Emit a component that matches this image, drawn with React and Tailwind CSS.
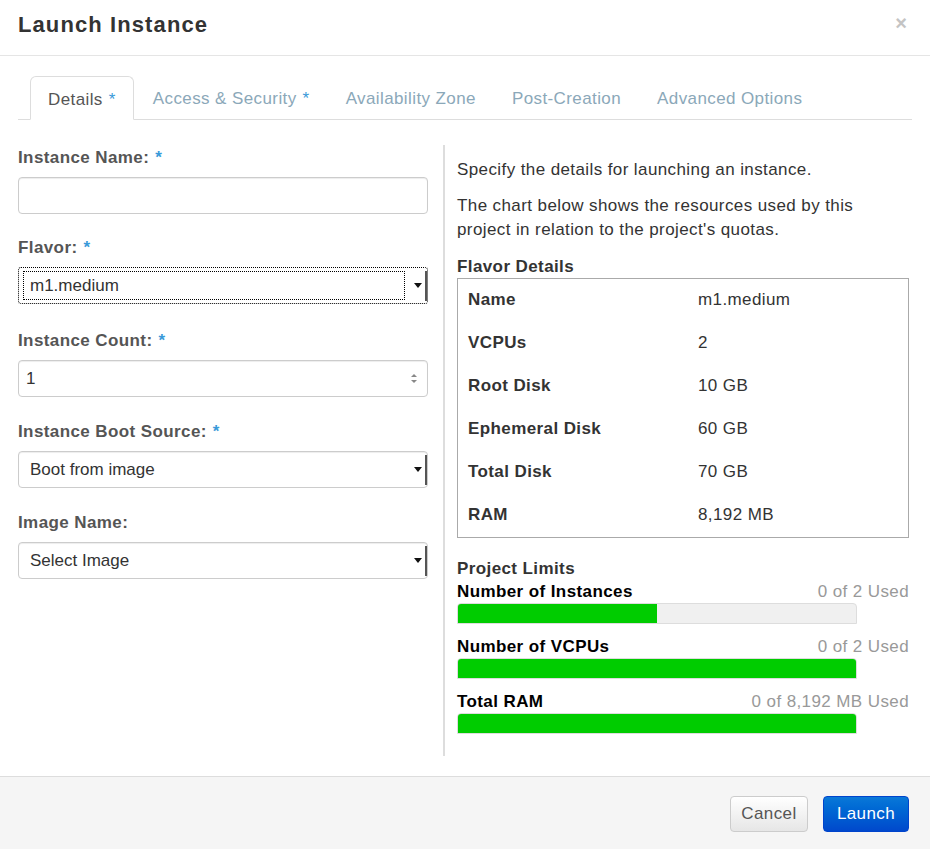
import React from "react";

const Star = () => <span className="text-[#3a9ad9] ml-[6px]">*</span>;

function Arrow() {
  return (
    <div className="flex items-center self-stretch">
      <svg width="8" height="5" viewBox="0 0 8 5" className="mr-[3px]">
        <path d="M0 0 L8 0 L4 5 Z" fill="#111" />
      </svg>
      <div className="w-[2px] h-[30px] bg-[#555] mt-[3px] self-start" />
    </div>
  );
}

function Select({ value, focused }) {
  if (focused) {
    return (
      <div className="h-[37px] border border-dotted border-black rounded-[3px] flex items-center pl-[4px] bg-white">
        <div className="flex-1 h-[29px] border border-dotted border-black flex items-center pl-[6px] text-[#333] mr-[9px]">
          {value}
        </div>
        <Arrow />
      </div>
    );
  }
  return (
    <div className="h-[37px] border border-[#ccc] rounded-[4px] flex items-center pl-[11px] bg-white shadow-[inset_0_1px_1px_rgba(0,0,0,0.075)]">
      <div className="flex-1 text-[#333]">{value}</div>
      <Arrow />
    </div>
  );
}

function Field({ label, required, children, mb }) {
  return (
    <div className={mb}>
      <div className="h-[20px] leading-[20px] mb-[9px] font-bold text-[#555] tracking-[0.4px]">
        {label}
        {required && <Star />}
      </div>
      {children}
    </div>
  );
}

function Limit({ label, used, pct }) {
  return (
    <div className="mb-[13px]">
      <div className="flex justify-between h-[20px] leading-[20px]">
        <span className="font-bold text-black tracking-[0.4px]">{label}</span>
        <span className="text-[#999] tracking-[0.4px]">{used}</span>
      </div>
      <div className="mt-[1px] w-[400px] h-[21px] bg-[#f0f0f0] border border-[#ddd] rounded-t-[4px] overflow-hidden">
        <div className="h-full bg-[#00cc00]" style={{ width: `${pct}%` }} />
      </div>
    </div>
  );
}

export default function App() {
  const tabs = [
    ["Access & Security", true],
    ["Availability Zone", false],
    ["Post-Creation", false],
    ["Advanced Options", false],
  ];
  const rows = [
    ["Name", "m1.medium"],
    ["VCPUs", "2"],
    ["Root Disk", "10 GB"],
    ["Ephemeral Disk", "60 GB"],
    ["Total Disk", "70 GB"],
    ["RAM", "8,192 MB"],
  ];
  return (
    <div className="w-[930px] h-[849px] bg-white flex flex-col font-['Liberation_Sans',Arial,sans-serif] text-[17px] text-[#333]">
      <div className="h-[56px] border-b border-[#e5e5e5] px-[18px] flex items-center justify-between shrink-0">
        <h3 className="text-[22px] font-bold text-[#333] tracking-[1.1px] mt-[-6px]">Launch Instance</h3>
        <span className="text-[#c4c4c4] text-[20px] font-bold mr-[5px] mt-[-9px]">×</span>
      </div>

      <div className="flex-1 px-[18px] pt-[20px] flex flex-col">
        <div className="flex items-end h-[44px] border-b border-[#ddd] pl-[12px]">
          <div className="h-[44px] pt-[3px] px-[17px] mr-[2px] border border-[#ddd] border-b-white rounded-t-[6px] -mb-px bg-white flex items-center text-[#555] tracking-[0.4px]">
            Details
            <Star />
          </div>
          {tabs.map(([t, req]) => (
            <div
              key={t}
              className="h-[44px] pt-[3px] px-[17px] mr-[2px] flex items-center text-[#8ba8b9] tracking-[0.4px]"
            >
              {t}
              {req && <Star />}
            </div>
          ))}
        </div>

        <div className="flex flex-1 pt-[25px] pb-[20px]">
          <div className="w-[410px] pt-[3px] mr-[15px]">
            <Field label="Instance Name:" required mb="mb-[24px]">
              <div className="h-[37px] border border-[#ccc] rounded-[4px] bg-white shadow-[inset_0_1px_1px_rgba(0,0,0,0.075)]" />
            </Field>
            <Field label="Flavor:" required mb="mb-[27px]">
              <Select value="m1.medium" focused />
            </Field>
            <Field label="Instance Count:" required mb="mb-[25px]">
              <div className="h-[37px] border border-[#ccc] rounded-[4px] bg-white flex items-center pl-[7px] pr-[10px] shadow-[inset_0_1px_1px_rgba(0,0,0,0.075)]">
                <span className="flex-1">1</span>
                <svg width="6" height="11" viewBox="0 0 6 11">
                  <path d="M0 4 L6 4 L3 1 Z" fill="#888" />
                  <path d="M0 7 L6 7 L3 10 Z" fill="#888" />
                </svg>
              </div>
            </Field>
            <Field label="Instance Boot Source:" required mb="mb-[25px]">
              <Select value="Boot from image" />
            </Field>
            <Field label="Image Name:" mb="mb-[25px]">
              <Select value="Select Image" />
            </Field>
          </div>

          <div className="flex-1 border-l-2 border-[#ddd] pl-[12px]">
            <p className="leading-[24px] mt-[13px] tracking-[0.4px]">Specify the details for launching an instance.</p>
            <p className="leading-[24px] mt-[12px] tracking-[0.4px] w-[420px]">
              The chart below shows the resources used by this project in relation to the project's quotas.
            </p>
            <div className="mt-[15px] h-[21px] leading-[20px] font-bold tracking-[0.4px]">Flavor Details</div>
            <div className="border border-[#aaa] w-[452px]">
              {rows.map(([k, v]) => (
                <div key={k} className="h-[43px] grid grid-cols-[230px_1fr] items-center px-[10px] pb-[2px]">
                  <span className="font-bold tracking-[0.4px]">{k}</span>
                  <span className="tracking-[0.4px]">{v}</span>
                </div>
              ))}
            </div>
            <div className="mt-[21px] mb-[3px] h-[20px] leading-[20px] font-bold tracking-[0.4px] w-[452px]">Project Limits</div>
            <div className="w-[452px]">
              <Limit label="Number of Instances" used="0 of 2 Used" pct={50} />
              <Limit label="Number of VCPUs" used="0 of 2 Used" pct={100} />
              <Limit label="Total RAM" used="0 of 8,192 MB Used" pct={100} />
            </div>
          </div>
        </div>
      </div>

      <div className="h-[73px] shrink-0 border-t border-[#ddd] bg-[#f5f5f5] flex items-start justify-end pt-[19px] pr-[21px] gap-[15px]">
        <button className="h-[36px] w-[78px] rounded-[4px] border border-[#ccc] bg-gradient-to-b from-white to-[#e6e6e6] text-[#555] tracking-[0.4px]">
          Cancel
        </button>
        <button className="h-[36px] w-[86px] rounded-[4px] border border-[#0044cc] bg-gradient-to-b from-[#0a78d8] to-[#0048cc] text-white tracking-[0.4px]">
          Launch
        </button>
      </div>
    </div>
  );
}
